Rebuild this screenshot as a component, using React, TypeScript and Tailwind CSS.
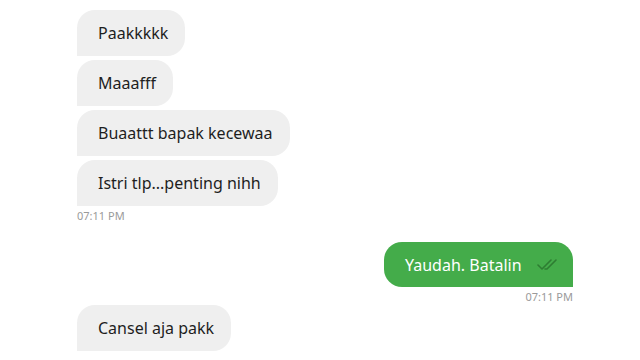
const incoming = ["Paakkkkk", "Maaafff", "Buaattt bapak kecewaa", "Istri tlp...penting nihh"];

function Left({ text }: { text: string }) {
  return (
    <div className="self-start h-[46px] flex items-center pl-[21px] pr-[17px] bg-[#efefef] rounded-[18px] rounded-bl-none text-[16px] text-[#1e1e1e]">
      {text}
    </div>
  );
}

function Checks() {
  return (
    <svg width="22" height="14" viewBox="0 0 22 14" fill="none" stroke="#2e7d32" strokeWidth="1.6" strokeLinecap="round" strokeLinejoin="round">
      <path d="M1 7l4 4 9-9" />
      <path d="M8 11l2 0 9-9" />
    </svg>
  );
}

export default function App() {
  return (
    <div className="w-[640px] h-[360px] bg-white overflow-hidden pl-[77px] pr-[67px] pt-[10px] flex flex-col" style={{ fontFamily: '"Noto Sans", "Open Sans", sans-serif' }}>
      <div className="flex flex-col gap-[4px]">
        {incoming.map((t) => (
          <Left key={t} text={t} />
        ))}
      </div>
      <div className="text-[11px] text-[#9a9a9a] mt-[2px] leading-[16px]">07:11 PM</div>

      <div className="self-end mt-[18px] h-[45px] w-[189px] flex items-center justify-between pl-[21px] pr-[14px] bg-[#44ac4a] rounded-[18px] rounded-br-none text-[16px] text-white">
        <span>Yaudah. Batalin</span>
        <Checks />
      </div>
      <div className="self-end text-[11px] text-[#9a9a9a] mt-[2px] leading-[16px]">07:11 PM</div>

      <div className="flex flex-col">
        <Left text="Cansel aja pakk" />
      </div>
    </div>
  );
}
